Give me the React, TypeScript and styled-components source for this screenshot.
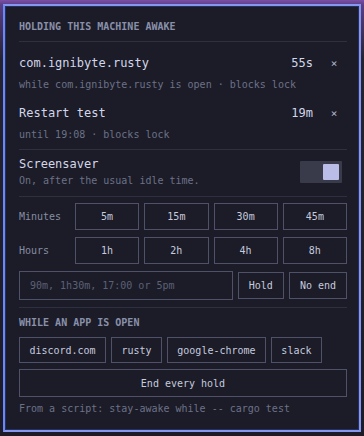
import React from "react";
import styled, { createGlobalStyle } from "styled-components";

const Global = createGlobalStyle`
  html, body {
    margin: 0;
    padding: 0;
  }
  body {
    width: 364px;
    height: 436px;
    overflow: hidden;
    background: linear-gradient(180deg, #7c4fa8 0px, #5b3f84 5px, #25232f 60px, #1d1c26 100%);
    font-family: "DejaVu Sans Mono", "Liberation Mono", monospace;
  }
`;

const Panel = styled.div`
  box-sizing: border-box;
  width: 358px;
  height: 428px;
  margin: 4px 0 0 3px;
  border: 2px solid #8697f2;
  border-left-color: #6a88fb;
  box-shadow: inset 0 0 0 1px #26305c;
  background: #1b1c27;
  padding: 14px 12px 13px 14px;
  display: flex;
  flex-direction: column;
`;

const Heading = styled.div`
  font-size: 10px;
  font-weight: bold;
  line-height: 14px;
  color: #8a90aa;
  text-transform: uppercase;
`;

const Divider = styled.div<{ $top: number }>`
  height: 1px;
  background: #2e3040;
  margin-top: ${(p) => p.$top}px;
`;

const HoldList = styled.div`
  display: flex;
  flex-direction: column;
  gap: 12px;
  padding-top: 12px;
`;

const Hold = styled.div`
  display: flex;
  flex-direction: column;
  gap: 6px;
`;

const HoldTop = styled.div`
  display: flex;
  align-items: center;
  height: 18px;
`;

const HoldName = styled.span`
  flex: 1;
  font-size: 12px;
  color: #d3d6ea;
`;

const HoldLeft = styled.span`
  font-size: 12px;
  color: #d3d6ea;
`;

const Close = styled.span`
  width: 26px;
  margin-left: 8px;
  text-align: center;
  font-size: 11px;
  color: #b4b8cc;
`;

const Sub = styled.div`
  font-size: 10px;
  line-height: 14px;
  color: #6d7188;
`;

const Saver = styled.div`
  display: flex;
  align-items: center;
  padding-top: 6px;
`;

const SaverText = styled.div`
  flex: 1;
  display: flex;
  flex-direction: column;
  gap: 2px;
`;

const SaverTitle = styled.div`
  font-size: 12px;
  line-height: 16px;
  color: #d3d6ea;
`;

const Toggle = styled.div<{ $on: boolean }>`
  box-sizing: border-box;
  width: 42px;
  height: 22px;
  padding: 3px;
  margin-right: 5px;
  border-radius: 1px;
  background: #393b4b;
  display: flex;
  justify-content: ${(p) => (p.$on ? "flex-end" : "flex-start")};
`;

const Knob = styled.div`
  width: 16px;
  height: 16px;
  border-radius: 1px;
  background: #b9bde8;
`;

const Presets = styled.div`
  display: grid;
  grid-template-columns: 51px repeat(4, 1fr);
  column-gap: 5px;
  row-gap: 7px;
  align-items: center;
  margin-top: 6px;
`;

const RowLabel = styled.span`
  font-size: 10px;
  color: #878ca4;
`;

const Btn = styled.button<{ $wide?: boolean }>`
  box-sizing: border-box;
  height: ${(p) => (p.$wide ? 28 : 27)}px;
  margin: 0;
  padding: 0 10px;
  border: 1px solid #4e5167;
  border-radius: 0;
  background: transparent;
  font-family: inherit;
  font-size: 10px;
  color: #c6cadf;
  white-space: nowrap;
  cursor: pointer;
`;

const Chip = styled(Btn)`
  height: 26px;
  padding: 0 9.4px;
`;

const CustomRow = styled.div`
  display: flex;
  align-items: center;
  gap: 5px;
  margin-top: 7px;
`;

const Input = styled.input`
  box-sizing: border-box;
  flex: 1;
  min-width: 0;
  height: 29px;
  margin: 0;
  padding: 0 10px;
  border: 1px solid #4e5167;
  border-radius: 0;
  background: transparent;
  font-family: inherit;
  font-size: 10px;
  color: #c6cadf;
  outline: none;
  &::placeholder {
    color: #5c6077;
  }
`;

const AppHeading = styled(Heading)`
  margin-top: 8px;
`;

const Chips = styled.div`
  display: flex;
  gap: 5px;
  margin-top: 7px;
`;

const EndAll = styled(Btn)`
  width: 100%;
  margin-top: 6px;
`;

const Footer = styled(Sub)`
  margin-top: 5px;
`;

const holds = [
  { name: "com.ignibyte.rusty", left: "55s", note: "while com.ignibyte.rusty is open · blocks lock" },
  { name: "Restart test", left: "19m", note: "until 19:08 · blocks lock" },
];

const minutes = ["5m", "15m", "30m", "45m"];
const hours = ["1h", "2h", "4h", "8h"];
const apps = ["discord.com", "rusty", "google-chrome", "slack"];

export default function App() {
  return (
    <>
      <Global />
      <Panel>
        <Heading>Holding this machine awake</Heading>
        <Divider $top={7} />
        <HoldList>
          {holds.map((h) => (
            <Hold key={h.name}>
              <HoldTop>
                <HoldName>{h.name}</HoldName>
                <HoldLeft>{h.left}</HoldLeft>
                <Close>×</Close>
              </HoldTop>
              <Sub>{h.note}</Sub>
            </Hold>
          ))}
        </HoldList>
        <Divider $top={7} />
        <Saver>
          <SaverText>
            <SaverTitle>Screensaver</SaverTitle>
            <Sub>On, after the usual idle time.</Sub>
          </SaverText>
          <Toggle $on>
            <Knob />
          </Toggle>
        </Saver>
        <Divider $top={8} />
        <Presets>
          <RowLabel>Minutes</RowLabel>
          {minutes.map((m) => (
            <Btn key={m}>{m}</Btn>
          ))}
          <RowLabel>Hours</RowLabel>
          {hours.map((h) => (
            <Btn key={h}>{h}</Btn>
          ))}
        </Presets>
        <CustomRow>
          <Input placeholder="90m, 1h30m, 17:00 or 5pm" />
          <Btn>Hold</Btn>
          <Btn>No end</Btn>
        </CustomRow>
        <Divider $top={7} />
        <AppHeading>While an app is open</AppHeading>
        <Chips>
          {apps.map((a) => (
            <Chip key={a}>{a}</Chip>
          ))}
        </Chips>
        <EndAll $wide>End every hold</EndAll>
        <Footer>From a script: stay-awake while -- cargo test</Footer>
      </Panel>
    </>
  );
}
